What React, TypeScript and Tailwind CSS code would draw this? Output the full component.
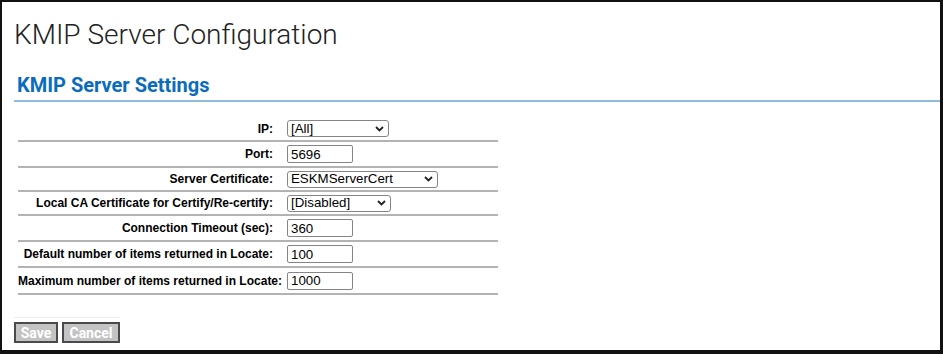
type Row = {
  label: string;
  kind: "select" | "input";
  value: string;
  width: string;
  height: string;
};

const rows: Row[] = [
  { label: "IP:", kind: "select", value: "[All]", width: "w-[102px]", height: "h-[25px]" },
  { label: "Port:", kind: "input", value: "5696", width: "w-[66px]", height: "h-[26px]" },
  { label: "Server Certificate:", kind: "select", value: "ESKMServerCert", width: "w-[151px]", height: "h-[24px]" },
  { label: "Local CA Certificate for Certify/Re-certify:", kind: "select", value: "[Disabled]", width: "w-[104px]", height: "h-[24px]" },
  { label: "Connection Timeout (sec):", kind: "input", value: "360", width: "w-[66px]", height: "h-[26px]" },
  { label: "Default number of items returned in Locate:", kind: "input", value: "100", width: "w-[66px]", height: "h-[26px]" },
  { label: "Maximum number of items returned in Locate:", kind: "input", value: "1000", width: "w-[66px]", height: "h-[27px]" },
];

const Field = ({ row }: { row: Row }) => {
  if (row.kind === "input") {
    return (
      <input
        defaultValue={row.value}
        className={`${row.width} h-[18px] border border-[#858585] rounded-[2px] px-[3px] font-['Arial','Liberation_Sans',sans-serif] text-[13.3px] leading-none text-black bg-white outline-none`}
      />
    );
  }
  return (
    <div
      className={`${row.width} h-[17px] flex items-center justify-between border border-[#858585] rounded-[3px] pl-[3px] pr-[4px] bg-white font-['Arial','Liberation_Sans',sans-serif] text-[13.3px] leading-none text-black`}
    >
      <span>{row.value}</span>
      {/* chevron */}
      <svg width="9" height="6" viewBox="0 0 9 6" fill="none">
        <path d="M1 1L4.5 4.5L8 1" stroke="#222" strokeWidth="1.8" />
      </svg>
    </div>
  );
};

export default function App() {
  return (
    <div className="w-[943px] h-[354px] bg-white border-l-2 border-t-2 border-r-[3px] border-b-[4px] border-[#111] overflow-hidden font-['Roboto','Liberation_Sans',sans-serif]">
      {/* PAGE TITLE */}
      <h1 className="pl-[12px] pt-[16px] text-[28px] leading-[33px] font-light text-[#222]">
        KMIP Server Configuration
      </h1>

      {/* SECTION HEADER */}
      <div className="ml-[12px] mt-[23px] border-b-2 border-[#8fbbe0] pb-[3px]">
        <h2 className="pl-[3px] text-[20px] leading-[23px] font-bold text-[#0b6cbd]">
          KMIP Server Settings
        </h2>
      </div>

      {/* SETTINGS TABLE */}
      <div className="ml-[16px] mt-[15px] w-[480px] font-['Arial','Liberation_Sans',sans-serif]">
        {rows.map((row) => (
          <div
            key={row.label}
            className={`flex items-center ${row.height} border-b-2 border-[#b3b3b3]`}
          >
            <div className="w-[262px] pr-[7px] text-right text-[12px] leading-[14px] font-bold text-black whitespace-nowrap">
              {row.label}
            </div>
            <div className="pl-[7px] flex items-center">
              <Field row={row} />
            </div>
          </div>
        ))}
      </div>

      {/* BUTTONS */}
      <div className="ml-[12px] mt-[22px] w-[106px] border-t border-[#eeeeee] pt-[4px] flex gap-[4px]">
        <button className="w-[44px] h-[21px] bg-[#c3c3c3] border-2 border-[#4a4a4a] text-white text-[14px] font-bold leading-none">
          Save
        </button>
        <button className="w-[58px] h-[21px] bg-[#c3c3c3] border-2 border-[#4a4a4a] text-white text-[14px] font-bold leading-none">
          Cancel
        </button>
      </div>
    </div>
  );
}
